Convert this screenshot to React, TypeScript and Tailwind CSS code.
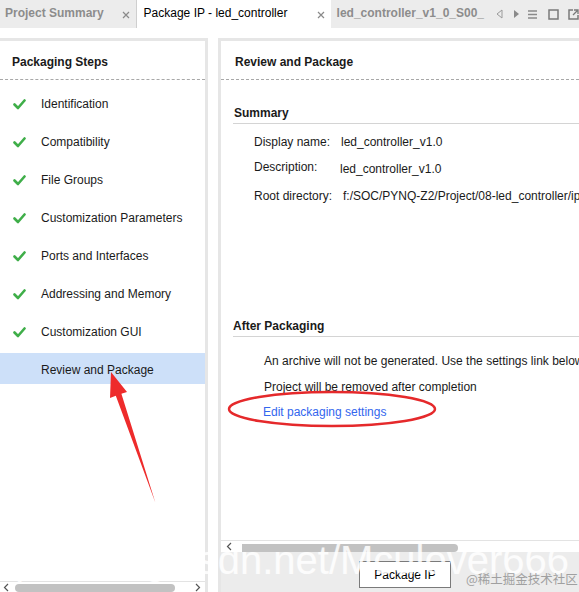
import React from "react";

const XIcon = ({ className = "" }: { className?: string }) => (
  <svg width="8" height="8" viewBox="0 0 8 8" className={className}>
    <path d="M1 1 L7 7 M7 1 L1 7" stroke="#8a8a8a" strokeWidth="1.2" fill="none" />
  </svg>
);

const Check = () => (
  <svg width="13" height="11" viewBox="0 0 13 11" className="shrink-0">
    <path d="M1.5 5.5 L5 9 L11.5 1.5" stroke="#3fae49" strokeWidth="2.6" fill="none" strokeLinecap="round" strokeLinejoin="round" />
  </svg>
);

const steps = [
  "Identification",
  "Compatibility",
  "File Groups",
  "Customization Parameters",
  "Ports and Interfaces",
  "Addressing and Memory",
  "Customization GUI",
];

export default function App() {
  return (
    <div
      className="relative w-[579px] h-[592px] overflow-hidden bg-white text-[12px] text-[#1a1a1a] flex flex-col"
      style={{ fontFamily: '"Liberation Sans", Arial, sans-serif' }}
    >
      {/* Tab bar */}
      <div className="h-[28px] bg-[#ececec] flex shrink-0">
        <div className="w-[138px] flex items-center pl-[5px] pb-[2px] font-bold text-[#8c8c8c] border-r border-[#cfcfcf]">
          <span>Project Summary</span>
          <XIcon className="ml-auto mr-[6px] mt-[3px]" />
        </div>
        <div className="w-[196px] bg-white flex items-center pl-[7px] pb-[2px] text-black">
          <span>Package IP - led_controller</span>
          <XIcon className="ml-auto mr-[6px] mt-[3px]" />
        </div>
        <div className="flex items-center pl-[6px] pb-[2px] font-bold text-[#8c8c8c] flex-1 whitespace-nowrap">
          <span>led_controller_v1_0_S00_</span>
          <div className="flex items-center ml-[12px] mt-[2px]">
            <svg width="7" height="10" viewBox="0 0 7 10">
              <path d="M6 1 L1 5 L6 9 Z" fill="none" stroke="#9a9a9a" strokeWidth="1" />
            </svg>
            <svg width="7" height="10" viewBox="0 0 7 10" className="ml-[10px]">
              <path d="M1 1 L6 5 L1 9 Z" fill="#8a8a8a" />
            </svg>
            <svg width="9" height="9" viewBox="0 0 9 9" className="ml-[8px]">
              <path d="M0 1 H9 M0 4.5 H9 M0 8 H9" stroke="#8a8a8a" strokeWidth="1.3" />
            </svg>
            <svg width="11" height="11" viewBox="0 0 11 11" className="ml-[11px]">
              <rect x="1" y="1" width="9" height="9" fill="none" stroke="#7a7a7a" strokeWidth="1.5" />
            </svg>
            <svg width="11" height="11" viewBox="0 0 11 11" className="ml-[9px]">
              <path d="M5 1 H1 V10 H10 V6" fill="none" stroke="#7a7a7a" strokeWidth="1.5" />
              <path d="M6 1 H10 V5 M10 1 L5 6" fill="none" stroke="#7a7a7a" strokeWidth="1.3" />
            </svg>
          </div>
        </div>
      </div>

      {/* Body */}
      <div className="flex-1 flex pt-[10px] min-h-0">
        {/* Left panel */}
        <div className="w-[208px] border-t-[3px] border-r-[3px] border-[#e6e6e6] flex flex-col">
          <div className="h-[39px] flex items-center pl-[12px] pt-[3px] font-bold border-b border-dashed border-[#a8a8a8]">
            Packaging Steps
          </div>
          <div className="flex flex-col gap-[7px] pt-[7px] flex-1">
            {steps.map((s) => (
              <div key={s} className="h-[31px] flex items-center pl-[13px] pt-[3px]">
                <Check />
                <span className="ml-[15px]">{s}</span>
              </div>
            ))}
            <div className="h-[31px] flex items-center pl-[41px] pt-[3px] bg-[#cde0f9]">Review and Package</div>
          </div>
          <div className="h-[11px] border-t border-[#e3e3e3] flex items-center relative">
            <svg width="6" height="9" viewBox="0 0 6 9" className="ml-[3px]">
              <path d="M5 1 L1.5 4.5 L5 8" fill="none" stroke="#555" strokeWidth="1.2" />
            </svg>
            <div className="ml-[6px] w-[160px] h-[8px] rounded-full bg-[#c2c2c2] self-end" />
            <svg width="6" height="9" viewBox="0 0 6 9" className="ml-auto mr-[4px]">
              <path d="M1 1 L4.5 4.5 L1 8" fill="none" stroke="#555" strokeWidth="1.2" />
            </svg>
          </div>
        </div>

        <div className="w-[10px]" />

        {/* Right panel */}
        <div className="flex-1 border-t-[3px] border-l-[3px] border-[#e6e6e6] flex flex-col min-w-0">
          <div className="h-[39px] flex items-center pl-[14px] pt-[3px] font-bold border-b border-dashed border-[#a8a8a8] shrink-0">
            Review and Package
          </div>
          <div className="flex-1 pl-[12px] whitespace-nowrap overflow-hidden">
            <div className="mt-[24px] h-[20px] flex items-center font-bold border-b border-[#d4d4d4] pb-[1px]">
              <span className="ml-[1px]">Summary</span>
            </div>
            <div className="pl-[21px]">
              <div className="h-[16px] mt-[10px] flex items-center">
                <span className="w-[87px] shrink-0">Display name:</span>
                <span>led_controller_v1.0</span>
              </div>
              <div className="h-[16px] mt-[9px] flex items-start">
                <span className="w-[86px] shrink-0 -mt-[1px]">Description:</span>
                <span className="mt-[1px]">led_controller_v1.0</span>
              </div>
              <div className="h-[16px] mt-[13px] flex items-center">
                <span className="w-[89px] shrink-0">Root directory:</span>
                <span>f:/SOC/PYNQ-Z2/Project/08-led_controller/ip_repo/led_controller_1.0</span>
              </div>
            </div>
            <div className="mt-[113px] h-[20px] flex items-center font-bold border-b border-[#d4d4d4] pb-[1px]">
              After Packaging
            </div>
            <div className="pl-[31px]">
              <div className="h-[16px] mt-[16px] flex items-center">
                An archive will not be generated. Use the settings link below to change this.
              </div>
              <div className="h-[16px] mt-[10px] flex items-center">Project will be removed after completion</div>
              <div className="h-[16px] mt-[9px] flex items-center -ml-[1px] text-[#3366ee]">Edit packaging settings</div>
            </div>
          </div>
          <div className="h-[12px] border-t border-[#e3e3e3] flex items-center shrink-0">
            <svg width="6" height="9" viewBox="0 0 6 9" className="ml-[5px]">
              <path d="M5 1 L1.5 4.5 L5 8" fill="none" stroke="#555" strokeWidth="1.2" />
            </svg>
            <div className="ml-[10px] w-[216px] h-[8px] rounded-r-full bg-[#c2c2c2] self-end" />
          </div>
          <div className="h-[40px] bg-[#ececec] flex items-start shrink-0 pt-[9px] pl-[138px]">
            <button className="w-[92px] h-[27px] bg-white border border-[#7a7a7a] text-black text-[12px]">
              Package IP
            </button>
          </div>
        </div>
      </div>

      {/* Annotations */}
      <svg className="absolute left-0 top-0 pointer-events-none" width="579" height="592" viewBox="0 0 579 592">
        <ellipse cx="332" cy="409" rx="103" ry="17" fill="none" stroke="#e5292b" strokeWidth="2.5" />
        <polygon
          points="111,372 127,392 121.4,393.8 155.5,503 115.8,395.8 110,398"
          fill="#ee2b2b"
        />
      </svg>

      {/* Watermarks */}
      <div
        className="absolute top-[540px] right-[10px] text-[40px] leading-none text-white/85 whitespace-nowrap pointer-events-none"
        style={{ fontFamily: '"Liberation Sans", Arial, sans-serif' }}
      >
        https://blog.csdn.net/Mculover666
      </div>
      <div
        className="absolute top-[573px] left-[466px] text-[12.5px] leading-none text-[#a0a0a0] whitespace-nowrap pointer-events-none"
        style={{ fontFamily: '"Noto Sans CJK SC", sans-serif' }}
      >
        @稀土掘金技术社区
      </div>
    </div>
  );
}
